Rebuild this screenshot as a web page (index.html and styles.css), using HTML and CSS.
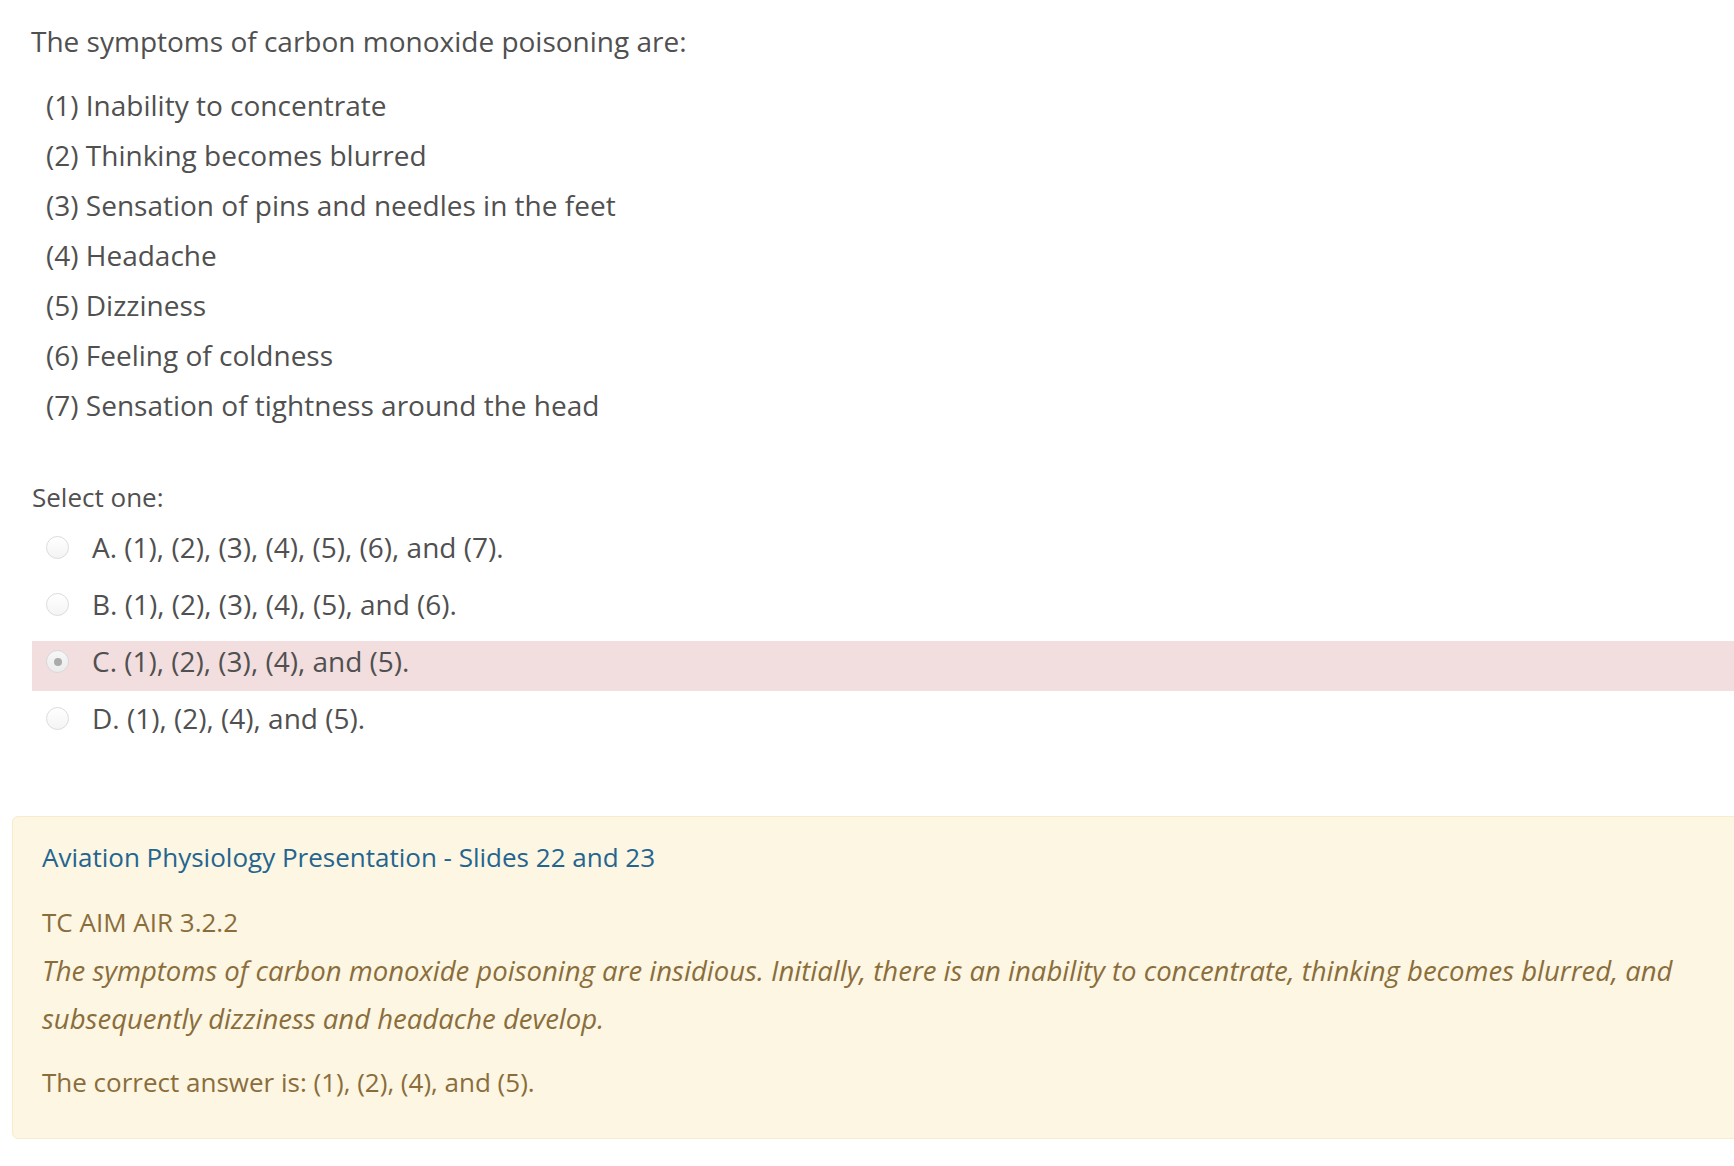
FILE: index.html
```html
<!DOCTYPE html>
<html>
<head>
<meta charset="utf-8">
<link rel="stylesheet" href="styles.css">
</head>
<body>
<div class="page">
  <div class="qtext">
    <p class="intro">The symptoms of carbon monoxide poisoning are:</p>
    <ul class="symptoms">
      <li>(1) Inability to concentrate</li>
      <li>(2) Thinking becomes blurred</li>
      <li>(3) Sensation of pins and needles in the feet</li>
      <li>(4) Headache</li>
      <li>(5) Dizziness</li>
      <li>(6) Feeling of coldness</li>
      <li>(7) Sensation of tightness around the head</li>
    </ul>
  </div>
  <div class="ablock">
    <div class="prompt">Select one:</div>
    <div class="answers">
      <div class="opt"><span class="radio"></span><span class="label">A. (1), (2), (3), (4), (5), (6), and (7).</span></div>
      <div class="opt"><span class="radio"></span><span class="label">B. (1), (2), (3), (4), (5), and (6).</span></div>
      <div class="opt incorrect"><span class="radio checked"></span><span class="label">C. (1), (2), (3), (4), and (5).</span></div>
      <div class="opt"><span class="radio"></span><span class="label">D. (1), (2), (4), and (5).</span></div>
    </div>
  </div>
  <div class="outcome">
    <div class="feedback">
      <p class="ref"><a href="#">Aviation Physiology Presentation - Slides 22 and 23</a></p>
      <p class="source">TC AIM AIR 3.2.2</p>
      <p class="quote">The symptoms of carbon monoxide poisoning are insidious. Initially, there is an inability to concentrate, thinking becomes blurred, and subsequently dizziness and headache develop.</p>
    </div>
    <div class="rightanswer">The correct answer is: (1), (2), (4), and (5).</div>
  </div>
</div>
</body>
</html>
```

FILE: styles.css
```css
html, body {
  margin: 0;
  padding: 0;
  overflow: hidden;
  background: #ffffff;
}
body {
  font-family: "Open Sans", "Liberation Sans", sans-serif;
  color: #505050;
}
.page {
  width: 1780px;
}
.qtext {
  padding: 16px 0 0 31px;
}
.intro {
  margin: 0;
  font-size: 28px;
  line-height: 50px;
}
.symptoms {
  list-style: none;
  margin: 14px 0 0 0;
  padding: 0 0 0 15px;
  font-size: 28px;
  line-height: 50px;
}
.ablock {
  padding: 47px 0 0 32px;
}
.prompt {
  font-size: 26px;
  line-height: 40px;
}
.answers {
  margin-top: 10px;
}
.opt {
  display: flex;
  align-items: flex-start;
  height: 50px;
  margin-bottom: 7px;
  padding-left: 14px;
  font-size: 28px;
  line-height: 40px;
}
.opt.incorrect {
  background: #f2dede;
}
.radio {
  box-sizing: border-box;
  width: 23px;
  height: 23px;
  border-radius: 50%;
  border: 1px solid #dcdcdc;
  background: linear-gradient(#ffffff, #f4f4f4);
  margin: 9px 23px 0 0;
  flex: none;
  display: flex;
  align-items: center;
  justify-content: center;
}
.radio.checked {
  background: linear-gradient(#f6f6f6, #ececec);
  border-color: #d8d8d8;
}
.radio.checked::after {
  content: "";
  width: 8px;
  height: 8px;
  border-radius: 50%;
  background: #ababab;
}
.outcome {
  margin: 68px 0 0 12px;
  background: #fcf6e3;
  border: 1px solid #faebcc;
  border-radius: 6px;
  padding: 16px 0 32px 29px;
  color: #8a6d3b;
  font-size: 26px;
}
.feedback p {
  margin: 0;
  line-height: 49px;
}
.feedback .ref a {
  color: #24658f;
  text-decoration: none;
}
.feedback .source {
  margin-top: 16px;
}
.feedback .quote {
  font-style: italic;
  font-size: 27.5px;
  line-height: 48px;
  padding-right: 0;
}
.rightanswer {
  margin-top: 15px;
  line-height: 48px;
}
```
